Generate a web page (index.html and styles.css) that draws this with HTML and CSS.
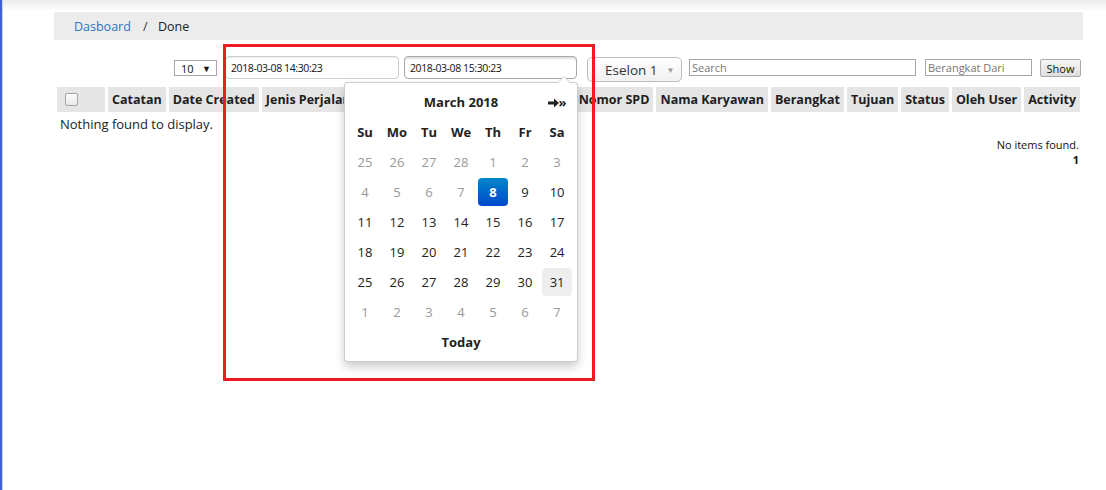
FILE: index.html
```html
<!DOCTYPE html>
<html lang="id">
<head>
<meta charset="utf-8">
<title>Done</title>
<link rel="stylesheet" href="styles.css">
</head>
<body>
<div class="window">
  <div class="page">
    <nav class="breadcrumb">
      <a class="crumb-link" href="#">Dasboard</a>
      <span class="crumb-sep">/</span>
      <span class="crumb-current">Done</span>
    </nav>

    <div class="toolbar">
      <div class="fake-select"><span>10</span><span class="caret-black">▼</span></div>
      <input class="date-input date-from" type="text" value="2018-03-08 14:30:23">
      <input class="date-input date-to" type="text" value="2018-03-08 15:30:23">
      <div class="eselon"><span>Eselon 1</span><span class="caret-gray">▼</span></div>
      <input class="plain-input search-input" type="text" placeholder="Search">
      <input class="plain-input from-input" type="text" placeholder="Berangkat Dari">
      <button class="show-btn" type="button">Show</button>
    </div>

    <table class="grid">
      <thead>
        <tr>
          <th class="col-check"><span class="checkbox"></span></th>
          <th class="col-fit">Catatan</th>
          <th class="col-fit">Date Created</th>
          <th>Jenis Perjalanan</th>
          <th>Keperluan</th>
          <th class="col-fit">Nomor SPD</th>
          <th class="col-fit">Nama Karyawan</th>
          <th class="col-fit">Berangkat</th>
          <th class="col-fit">Tujuan</th>
          <th class="col-fit">Status</th>
          <th class="col-fit">Oleh User</th>
          <th class="col-fit">Activity</th>
        </tr>
      </thead>
      <tbody>
        <tr>
          <td class="empty" colspan="12">Nothing found to display.</td>
        </tr>
      </tbody>
    </table>

    <div class="pager">
      <div class="pager-info">No items found.</div>
      <div class="pager-pages">1</div>
    </div>
  </div>

  <div class="datepicker">
    <table class="cal">
      <colgroup>
        <col class="cal-col"><col class="cal-col"><col class="cal-col"><col class="cal-col"><col class="cal-col"><col class="cal-col"><col class="cal-col">
      </colgroup>
      <thead>
        <tr class="cal-head">
          <th></th>
          <th colspan="5" class="cal-title">March 2018</th>
          <th class="cal-next"><svg class="next-arrow" width="11" height="10" viewBox="0 0 11 10"><path d="M0 3.6h6V0.6L11 5 6 9.4V6.4H0z" fill="#222"/></svg><span>»</span></th>
        </tr>
        <tr class="cal-dow">
          <th>Su</th><th>Mo</th><th>Tu</th><th>We</th><th>Th</th><th>Fr</th><th>Sa</th>
        </tr>
      </thead>
      <tbody>
        <tr><td class="old"><span>25</span></td><td class="old"><span>26</span></td><td class="old"><span>27</span></td><td class="old"><span>28</span></td><td class="off"><span>1</span></td><td class="off"><span>2</span></td><td class="off"><span>3</span></td></tr>
        <tr><td class="off"><span>4</span></td><td class="off"><span>5</span></td><td class="off"><span>6</span></td><td class="off"><span>7</span></td><td class="active"><span>8</span></td><td><span>9</span></td><td><span>10</span></td></tr>
        <tr><td><span>11</span></td><td><span>12</span></td><td><span>13</span></td><td><span>14</span></td><td><span>15</span></td><td><span>16</span></td><td><span>17</span></td></tr>
        <tr><td><span>18</span></td><td><span>19</span></td><td><span>20</span></td><td><span>21</span></td><td><span>22</span></td><td><span>23</span></td><td><span>24</span></td></tr>
        <tr><td><span>25</span></td><td><span>26</span></td><td><span>27</span></td><td><span>28</span></td><td><span>29</span></td><td><span>30</span></td><td class="hover"><span>31</span></td></tr>
        <tr><td class="old"><span>1</span></td><td class="old"><span>2</span></td><td class="old"><span>3</span></td><td class="old"><span>4</span></td><td class="old"><span>5</span></td><td class="old"><span>6</span></td><td class="old"><span>7</span></td></tr>
      </tbody>
      <tfoot>
        <tr><td colspan="7" class="cal-today">Today</td></tr>
      </tfoot>
    </table>
  </div>

  <div class="annotation"></div>
</div>
</body>
</html>
```

FILE: styles.css
```css
html, body {
  margin: 0;
  padding: 0;
  background: #fff;
}

body {
  font-family: "Open Sans", "Noto Sans", sans-serif;
  font-size: 13px;
  color: #222;
}

.window {
  position: relative;
  min-height: 490px;
  box-sizing: border-box;
  border-left: 2px solid #3f63cc;
  box-shadow: inset 1px 0 0 #c9d3f0;
  background: linear-gradient(#ececec, #fbfbfb 9px, #fff 11px);
  padding-top: 12px;
}

.page {
  margin-left: 52px;
  width: 1029px;
}

/* breadcrumb */
.breadcrumb {
  height: 28px;
  line-height: 30px;
  background: #ececec;
  padding-left: 20px;
  font-size: 12.5px;
  overflow: hidden;
}

.crumb-link {
  color: #2a76c6;
  text-decoration: none;
}

.crumb-sep {
  color: #333;
  margin: 0 7px 0 9px;
}

.crumb-current {
  color: #222;
}

/* toolbar */
.toolbar {
  display: flex;
  justify-content: flex-end;
  align-items: flex-start;
  margin-top: 16px;
  padding-right: 2px;
  height: 27px;
}

.fake-select {
  box-sizing: border-box;
  width: 43px;
  height: 16px;
  margin-top: 4px;
  border: 1px solid #a6a6a6;
  display: flex;
  justify-content: space-between;
  align-items: center;
  padding: 0 5px 0 6px;
  font-size: 11px;
  color: #111;
}

.caret-black {
  font-size: 9px;
  color: #111;
}

.date-input {
  box-sizing: border-box;
  height: 23px;
  width: 174px;
  border: 1px solid #cfcfcf;
  border-radius: 4px;
  box-shadow: inset 0 1px 1px rgba(0, 0, 0, 0.08);
  padding: 0 5px;
  font-family: "Open Sans", "Noto Sans", sans-serif;
  font-size: 10.5px;
  letter-spacing: -0.4px;
  color: #111;
  outline: none;
}

.date-from {
  margin-left: 8px;
}

.date-to {
  margin-left: 5px;
  width: 173px;
  border-color: #a9a9a9;
  box-shadow: inset 0 2px 1px rgba(0, 0, 0, 0.12);
}

.eselon {
  box-sizing: border-box;
  margin-left: 10px;
  margin-top: 1px;
  width: 95px;
  height: 25px;
  border: 1px solid #bdbdbd;
  border-radius: 5px;
  background: linear-gradient(#ffffff, #f1f1f1);
  display: flex;
  align-items: center;
  padding-left: 17px;
  font-size: 13.5px;
  color: #333;
}

.caret-gray {
  font-size: 8px;
  color: #999;
  margin-left: 9px;
}

.plain-input {
  box-sizing: border-box;
  height: 17px;
  margin-top: 3px;
  border: 1px solid #a6a6a6;
  padding: 0 2px;
  font-family: "Open Sans", "Noto Sans", sans-serif;
  font-size: 11px;
  color: #111;
  outline: none;
}

.plain-input::placeholder {
  color: #777;
}

.search-input {
  margin-left: 7px;
  width: 227px;
}

.from-input {
  margin-left: 9px;
  width: 107px;
}

.show-btn {
  box-sizing: border-box;
  margin-left: 8px;
  margin-top: 3px;
  width: 41px;
  height: 18px;
  padding: 0;
  border: 1px solid #a9a9a9;
  border-radius: 2px;
  background: linear-gradient(#f6f6f6, #dedede);
  font-family: "Open Sans", "Noto Sans", sans-serif;
  font-size: 11px;
  color: #111;
}

/* grid */
.grid {
  width: 100%;
  border-spacing: 3px;
  margin-top: 1px;
}

.grid th {
  background: #e5e5e5;
  font-weight: bold;
  font-size: 12.5px;
  color: #1e1e1e;
  text-align: left;
  padding: 4px 4px;
  line-height: 17px;
  white-space: nowrap;
}

.grid .col-fit {
  width: 1%;
}

.grid .col-check {
  width: 36px;
  padding-left: 8px;
}

.checkbox {
  display: block;
  width: 11px;
  height: 11px;
  border: 1px solid #a5a5a5;
  border-radius: 2px;
  background: linear-gradient(#fdfdfd, #e8e8e8);
}

.grid td.empty {
  padding: 1px 3px;
  font-size: 13px;
  color: #222;
  line-height: 17px;
}

/* pager */
.pager {
  text-align: right;
  padding-right: 4px;
  margin-top: 0;
  font-size: 11px;
  color: #111;
  line-height: 15px;
}

.pager-pages {
  font-weight: bold;
}

/* datepicker dropdown */
.datepicker {
  position: absolute;
  left: 342px;
  top: 82px;
  width: 234px;
  box-sizing: border-box;
  padding: 4px;
  background: #fff;
  border: 1px solid rgba(0, 0, 0, 0.2);
  border-radius: 4px;
  box-shadow: 0 5px 10px rgba(0, 0, 0, 0.2);
  z-index: 5;
}

.datepicker::before {
  content: "";
  position: absolute;
  top: -7px;
  right: 6px;
  border-left: 7px solid transparent;
  border-right: 7px solid transparent;
  border-bottom: 7px solid #cccccc;
}

.datepicker::after {
  content: "";
  position: absolute;
  top: -6px;
  right: 7px;
  border-left: 6px solid transparent;
  border-right: 6px solid transparent;
  border-bottom: 6px solid #fff;
}

.cal {
  border-collapse: collapse;
  table-layout: fixed;
  width: 224px;
  font-size: 13px;
}

.cal-col {
  width: 32px;
}

.cal th,
.cal td {
  height: 30px;
  padding: 0;
  text-align: center;
  vertical-align: middle;
}

.cal-title,
.cal-dow th {
  font-weight: bold;
  color: #222;
}

.cal-next {
  font-weight: bold;
  white-space: nowrap;
}

.next-arrow {
  vertical-align: -1px;
}

.cal-next span {
  font-size: 13px;
}

.cal td span {
  display: block;
  height: 28px;
  line-height: 28px;
  margin: 1px;
  border-radius: 4px;
  color: #222;
}

.cal td.old span,
.cal td.off span {
  color: #999;
}

.cal td.active span {
  background: linear-gradient(#0088cc, #0047cc);
  color: #fff;
  font-weight: bold;
  text-shadow: 0 -1px 0 rgba(0, 0, 0, 0.25);
}

.cal td.hover span {
  background: #eeeeee;
}

.cal td.cal-today {
  font-weight: bold;
  color: #222;
}

/* red annotation frame over the screenshot */
.annotation {
  position: absolute;
  left: 221px;
  top: 44px;
  width: 372px;
  height: 337px;
  box-sizing: border-box;
  border: 3px solid #ed1c24;
  pointer-events: none;
  z-index: 10;
}
```
